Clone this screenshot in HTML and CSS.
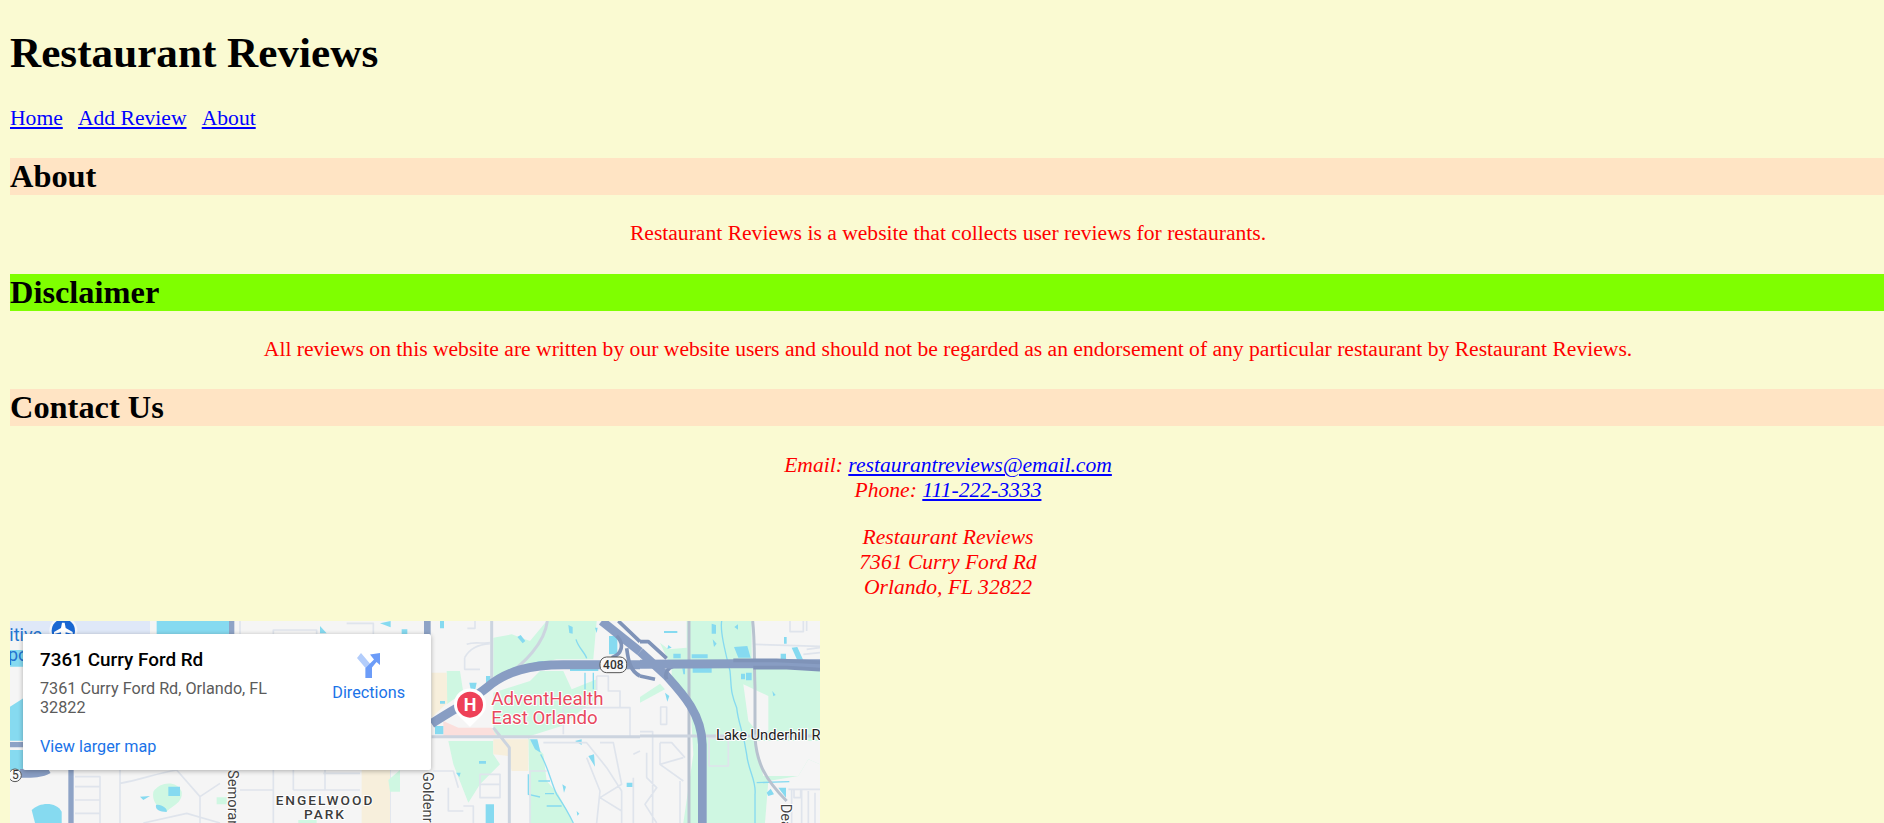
FILE: index.html
```html
<!DOCTYPE html>
<html lang="en">
<head>
<meta charset="utf-8">
<title>Restaurant Reviews</title>
<link rel="stylesheet" href="styles.css">
</head>
<body>
<header>
  <h1>Restaurant Reviews</h1>
  <nav class="nav"><a href="#">Home</a><a href="#">Add Review</a><a href="#">About</a></nav>
</header>
<main>
  <h2 class="band band-peach">About</h2>
  <p class="copy">Restaurant Reviews is a website that collects user reviews for restaurants.</p>
  <h2 class="band band-green">Disclaimer</h2>
  <p class="copy">All reviews on this website are written by our website users and should not be regarded as an endorsement of any particular restaurant by Restaurant Reviews.</p>
  <h2 class="band band-peach">Contact Us</h2>
  <address class="copy contact">
    Email: <a href="#">restaurantreviews@email.com</a><br>
    Phone: <a href="#">111-222-3333</a>
  </address>
  <address class="copy contact">
    Restaurant Reviews<br>
    7361 Curry Ford Rd<br>
    Orlando, FL 32822
  </address>
  <div class="map">
    <svg class="map-art" viewBox="0 0 810 202" width="810" height="202" aria-hidden="true">
      <rect class="land" width="810" height="202"/>
      <!-- west part, behind the card -->
      <g transform="translate(-10 -11) scale(.33333)">
        <path class="air" d="M30 33H450V72H30Z"/>
        <path class="water" d="M470 33H690V72H470Z"/>
        <path class="water" d="M30 120H70V170H30ZM30 290L70 265V392H30ZM30 420H70V480H30V420Z"/>
        <path class="water" d="M1140 40L1172 33V52ZM960 48L980 70H960ZM1205 58H1222V72H1205Z"/>
        <path class="mn" d="M720 33V72M1040 40H1120V72M820 72V60H950V72"/>
        <path class="rd-thick" d="M695 33V72M213 480V639M30 404H70"/>
        <path class="road-edge" d="M1282 33V470"/>
        <path class="ramp" d="M60 490C100 490 125 490 145 478"/>
        <path class="mn" d="M225 500H300V639M225 530H300M225 570H300M225 610H300M360 480V639M360 520C420 510 470 490 530 480M530 480L600 560L660 520M600 560V639M430 639L560 610L660 639"/>
        <path class="mn" d="M720 540H820V639M820 480V540M880 480V540M880 540H1080M975 480V540M970 490H1080M1170 480V639"/>
        <path class="green" d="M460 545C480 515 530 510 545 545C550 580 510 590 500 605C470 595 455 570 460 545Z"/>
        <path class="water" d="M505 530H540V558H505ZM468 585C480 580 505 595 500 606C480 605 465 600 468 585ZM420 560L450 558L430 570Z"/>
        <path class="green" d="M650 562H680V583H650ZM895 630H950V639H895Z"/>
        <path class="water" d="M95 600C120 575 170 575 185 605V639H105Z"/>
        <path class="tan" d="M1085 480H1170V639H1085Z"/>
        <path class="green" d="M1165 510L1200 480V545H1170Z"/>
        <circle class="badge-ring" cx="190" cy="62" r="42"/>
        <circle class="badge" cx="190" cy="62" r="35"/>
        <path class="plane" d="M186 38H194L197 54L218 66V72L197 67L196 78L203 84V88L190 85L177 88V84L184 78L183 67L162 72V66L183 54Z"/>
        <text class="lbl lbl-air" x="28" y="92">itive</text>
        <text class="lbl lbl-air" x="24" y="152">po</text>
        <circle class="shield" cx="45" cy="496" r="19"/>
        <text class="lbl lbl-num" x="36" y="508">5</text>
        <text class="lbl lbl-rot" transform="translate(684 480) rotate(90)">Semoran</text>
        <text class="lbl lbl-park" x="975" y="584">ENGELWOOD</text>
        <text class="lbl lbl-park" x="975" y="626">PARK</text>
        <text class="lbl lbl-rot" transform="translate(1270 485) rotate(90)">Goldenr</text>
      </g>
      <!-- middle part -->
      <g transform="translate(420 0) scale(.33333)">
        <path class="green" d="M190 50L245 40L300 60L350 0H500L490 115L380 115L290 135L190 190Z"/>
        <path class="green" d="M190 215L300 180L330 150H400L425 205L500 175V230L395 315L300 345H190Z"/>
        <path class="green" d="M50 150H90L100 215L50 250Z"/>
        <path class="green" d="M55 360H190V400L210 430L150 490L115 545L70 430Z"/>
        <path class="green" d="M295 350L340 400L350 480L385 520L430 606H300Z"/>
        <path class="tan" d="M5 155H50L52 245L5 290ZM190 355H295V450H245L235 405L190 400Z"/>
        <path class="pink" d="M40 300L85 320H185L200 345H40Z"/>
        <path class="water" d="M30 0H42V22H30ZM262 48L272 42L286 60L278 67ZM118 185H140L136 205H122ZM168 165H182V195H168ZM30 240H45V248H30ZM415 12L428 18V38L418 36ZM495 20H503L500 36ZM285 138C300 125 320 122 340 120V132L300 142ZM420 144H505V150H420ZM537 45H562V100H537ZM300 355H322L332 395L315 385ZM435 360L455 355V372ZM475 405L492 400L495 437ZM590 485H608V498H590ZM397 490L408 497L402 515ZM147 420H168V428H147ZM78 455H92L88 468ZM167 550H192V606H167ZM15 315H40V340H15ZM440 570L448 578L442 584Z"/>
        <path class="stream" d="M438 55C445 80 465 95 470 112M465 155V205M490 155V205M332 400C355 440 365 490 380 520C400 550 420 585 430 606M295 460V520L330 528M325 480H360M345 518H372M350 555H395"/>
        <path class="mn" d="M135 0V22H112M110 70C135 60 160 70 180 65M104 110C120 80 150 70 180 68M104 110V145H150M500 165H535V210H570V260H500M500 165V250M570 260H600V345M400 260H500M400 260V340"/>
        <path class="mn" d="M340 365H470L530 440L575 510V606M510 365H550L575 490L510 530L575 570M470 410L510 510L500 606M350 450H300V606M150 460H210V530H150ZM150 490H210M100 555H130V606M10 450H70L85 500M55 500V570H100M610 400L630 390M610 470V606"/>
        <path class="rd" d="M185 0V170L192 190M352 0C345 60 290 130 195 185M5 347H630M190 320L238 380V606"/>
        <path class="ramp-wide" d="M5 308C60 272 120 240 170 200C230 150 300 131 400 131H630"/>
        <path class="ramp" d="M515 0L630 92"/>
        <path class="ramp-thin" d="M565 0L630 62M560 45C585 70 575 100 545 110M590 82C595 120 600 150 630 165"/>
        <rect class="shield" x="510" y="108" width="80" height="47" rx="20"/>
        <text class="lbl lbl-408" x="550" y="144">408</text>
        <path class="pin-halo" d="M120 318L84 282A48 48 0 1 1 156 282Z"/>
        <circle class="pin" cx="120" cy="251" r="39"/>
        <text class="lbl lbl-h" x="120" y="270">H</text>
        <text class="lbl lbl-poi" x="184" y="253">AdventHealth</text>
        <text class="lbl lbl-poi" x="184" y="309">East Orlando</text>
      </g>
      <!-- east part -->
      <g transform="translate(630 0) scale(.33333)">
        <path class="green" d="M60 65L85 85L140 80V0H335V120H85Z"/>
        <path class="green" d="M95 140H540V430L505 415L475 465L385 480L375 606H130L160 400L150 230L95 175Z"/>
        <path class="green" d="M0 228L60 188L75 205L0 245Z"/>
        <path class="land" d="M310 190L385 225V330H350L325 300ZM345 360H540V430L505 415L475 465H370Z"/>
        <path class="water" d="M72 30H112V36H72ZM85 72L95 80L82 84ZM100 98H122V112H100ZM155 100H203V112H155ZM158 140H215V155H158ZM127 142H135V160H130ZM215 8L228 12V38H215ZM218 55L230 68L222 78ZM283 18L294 10V26ZM282 78L322 75L332 110H295ZM303 158H315V175H303ZM318 155H335V178H318ZM397 210L407 222L400 226ZM432 48H440V68H432ZM422 98H438V115H422ZM455 80L472 78L490 118H472ZM75 215L88 225L82 242ZM380 515L392 503L402 520L385 525ZM415 500H438V530Z"/>
        <path class="stream" d="M245 0C240 30 255 90 270 150C275 200 270 210 290 260C295 310 310 330 320 400C325 450 350 480 345 520V606M350 485L448 482"/>
        <path class="mn" d="M62 258H80V310H62ZM207 352H265V435H207ZM0 332H38V606M60 365V430L130 410M60 365H95L135 410M60 430L130 480M20 395V470M20 470L50 500L15 550L50 606M120 480V606M340 70L540 76M450 0V32H490V0M500 0V30M490 100L540 95M500 85L540 80M445 505H540M455 505V606M485 505V606M505 510V606M525 515V606M462 505V530H482V505"/>
        <path class="rd-strong" d="M147 0V606M338 0C345 60 342 120 345 200V350C350 420 370 470 440 540"/>
        <path class="rd" d="M0 345H540"/>
        <path class="ramp" d="M0 92L80 165C130 220 185 280 187 370V606"/>
        <path class="ramp-thin" d="M0 62H25L80 112M80 175C72 155 85 140 100 136M0 165L45 175"/>
        <path class="ramp-wide" d="M0 130L280 128H540"/>
        <path class="ramp-thin" d="M280 118H410L540 124M340 140H440L540 146"/>
        <text class="lbl lbl-road" x="228" y="358">Lake Underhill R</text>
        <text class="lbl lbl-rot" transform="translate(423 548) rotate(90)">Dea</text>
      </g>
    </svg>
    <div class="place-card">
      <div class="place-info">
        <div class="place-name">7361 Curry Ford Rd</div>
        <div class="place-addr">7361 Curry Ford Rd, Orlando, FL 32822</div>
        <a class="place-link" href="#">View larger map</a>
      </div>
      <a class="place-dir" href="#">
        <svg class="dir-icon" viewBox="0 0 23 25" width="23" height="25" aria-hidden="true">
          <path class="dir-light" d="M0 5L4 0L15 13V25H8.500V15Z"/>
          <path class="dir-dark" d="M8.500 25V15L17 6.500L13 1.500L23 0V12L19.500 9L15 14.500V25Z"/>
        </svg>
        <span>Directions</span>
      </a>
    </div>
  </div>
</main>
</body>
</html>
```
FILE: styles.css
```css
html {
  overflow: hidden;
}
body {
  margin: 0;
  padding: 9.6px 0 0 10px;
  height: 823px;
  box-sizing: border-box;
  background: #fafad2;
  color: #000;
  font-family: "Liberation Serif", "Times New Roman", serif;
  font-size: 21.6px;
  overflow: hidden;
}
h1 {
  margin: 18.4px 0 29px;
  font-size: 43.2px;
}
.nav {
  display: flex;
  gap: 15.2px;
  margin-bottom: 26.9px;
}
a {
  color: #00f;
}
.band {
  margin: 27.8px 0 26px;
  font-size: 32.4px;
}
.band:first-child {
  margin-top: 26.9px;
}
.band-peach {
  background: #ffe4c4;
}
.band-green {
  background: #7fff00;
}
.copy {
  margin: 21.6px 0;
  padding-left: 2px;
  color: #f00;
  text-align: center;
}
.contact {
  font-style: italic;
}
.band + .contact {
  margin-top: 26.9px;
}
.contact + .contact {
  margin-bottom: 20.6px;
}

/* Map */
.map {
  position: relative;
  width: 810px;
  height: 202px;
  overflow: hidden;
  font-family: Roboto, "Liberation Sans", sans-serif;
}
.map-art {
  display: block;
}
.land { fill: #f5f5f5; }
.green { fill: #cff7e2; }
.water { fill: #86daf0; }
.air { fill: #dfe8f8; }
.tan { fill: #f7efdc; }
.pink { fill: #fbdfdc; }
.rd, .rd-strong, .road-edge, .mn, .stream, .ramp, .ramp-thin, .ramp-wide, .rd-thick {
  fill: none;
  stroke-linejoin: round;
}
.mn { stroke: #dfe4ec; stroke-width: 5; }
.rd { stroke: #ccd4df; stroke-width: 9; }
.rd-strong { stroke: #b8c2cf; stroke-width: 9; }
.road-edge { stroke: #8ea3c6; stroke-width: 20; }
.stream { stroke: #86daf0; stroke-width: 4; }
.rd-thick { stroke: #8ea3c6; stroke-width: 16; }
.ramp { stroke: #889dc3; stroke-width: 26; }
.ramp-wide { stroke: #889dc3; stroke-width: 27; }
.ramp-thin { stroke: #7f93b8; stroke-width: 11; }
.shield { fill: #f8f8f8; stroke: #555; stroke-width: 3; }
.badge-ring { fill: #f5f7fb; }
.badge { fill: #1967d2; }
.plane { fill: #fff; }
.pin-halo { fill: #fff; }
.pin { fill: #ee4158; }
.lbl {
  font-family: Roboto, "Liberation Sans", sans-serif;
  paint-order: stroke;
  stroke: #fff;
  stroke-width: 6px;
  stroke-linejoin: round;
}
.lbl-air { font-size: 54px; fill: #2374cf; stroke-width: 0; }
.lbl-num { font-size: 36px; fill: #333; stroke-width: 0; }
.lbl-rot { font-size: 44px; fill: #444; }
.lbl-park {
  font-size: 41px;
  font-weight: 500;
  letter-spacing: 6px;
  fill: #3c3c3c;
  text-anchor: middle;
}
.lbl-408 { font-size: 36px; font-weight: 500; fill: #333; text-anchor: middle; stroke-width: 0; }
.lbl-h { font-size: 54px; font-weight: 700; fill: #fff; text-anchor: middle; stroke-width: 0; }
.lbl-poi { font-size: 56px; fill: #e8485e; }
.lbl-road { font-size: 44px; fill: #222; }

/* Info card */
.place-card {
  position: absolute;
  top: 13px;
  left: 13px;
  display: flex;
  justify-content: space-between;
  box-sizing: border-box;
  width: 408px;
  height: 136px;
  padding: 15px 26px 0 17px;
  background: #fff;
  border-radius: 2px;
  box-shadow: 0 1px 5px rgba(0, 0, 0, .3);
}
.place-info {
  display: flex;
  flex-direction: column;
  width: 250px;
}
.place-name {
  color: #000;
  font-size: 18.9px;
  font-weight: 500;
  line-height: 22px;
}
.place-addr {
  margin-top: 8px;
  color: #5b5b5b;
  font-size: 16.2px;
  line-height: 19px;
}
.place-link {
  margin-top: 20px;
  color: #1a73e8;
  font-size: 16.2px;
  line-height: 19px;
  text-decoration: none;
}
.place-dir {
  display: flex;
  flex-direction: column;
  align-items: center;
  gap: 5px;
  margin-top: 4px;
  color: #1a73e8;
  font-size: 16.2px;
  line-height: 19px;
  text-decoration: none;
}
.dir-light { fill: #b3cdfb; }
.dir-dark { fill: #6c9cf8; }
```
